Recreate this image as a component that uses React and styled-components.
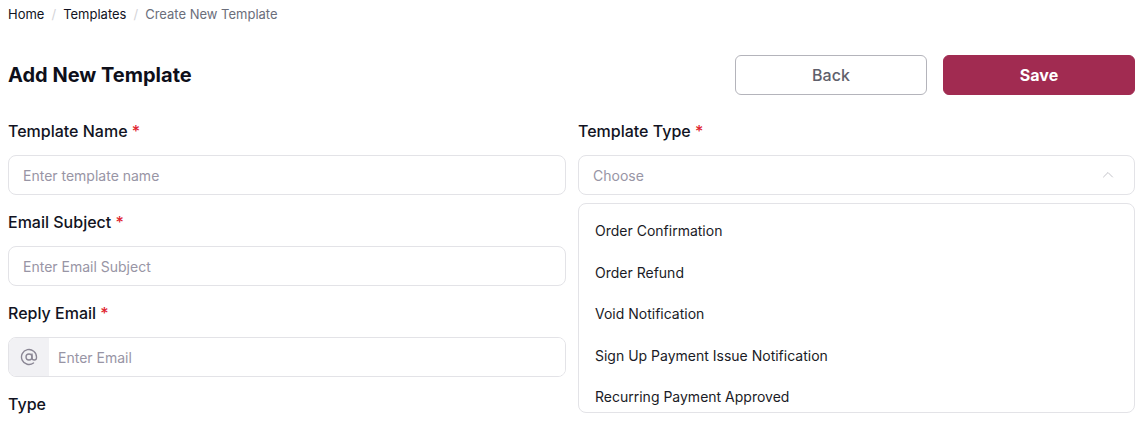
import React from 'react'
import styled, { createGlobalStyle } from 'styled-components'

const GlobalStyle = createGlobalStyle`
  html, body {
    margin: 0;
    padding: 0;
    background: #ffffff;
    font-family: Inter, "Noto Sans", sans-serif;
    color: #111322;
  }
  * { box-sizing: border-box; }
`

const options = [
  'Order Confirmation',
  'Order Refund',
  'Void Notification',
  'Sign Up Payment Issue Notification',
  'Recurring Payment Approved',
]

const App = () => {
  return (
    <Page>
      <GlobalStyle />
      <Breadcrumb>
        <Crumb>Home</Crumb>
        <Sep>/</Sep>
        <Crumb>Templates</Crumb>
        <Sep>/</Sep>
        <Crumb current>Create New Template</Crumb>
      </Breadcrumb>

      <TopBar>
        <Title>Add New Template</Title>
        <Actions>
          <Button>Back</Button>
          <Button primary>Save</Button>
        </Actions>
      </TopBar>

      <Grid>
        <Column>
          <Field>
            <Label>Template Name <Req>*</Req></Label>
            <Input placeholder="Enter template name" />
          </Field>
          <Field>
            <Label>Email Subject <Req>*</Req></Label>
            <Input placeholder="Enter Email Subject" />
          </Field>
          <Field>
            <Label>Reply Email <Req>*</Req></Label>
            <Group>
              <Addon>
                <svg width="18" height="18" viewBox="0 0 24 24" fill="none" stroke="#8a8694" strokeWidth="1.8" strokeLinecap="round" strokeLinejoin="round">
                  <circle cx="12" cy="12" r="4" />
                  <path d="M16 8v5a3 3 0 0 0 6 0v-1a10 10 0 1 0-4 8" />
                </svg>
              </Addon>
              <GroupInput placeholder="Enter Email" />
            </Group>
          </Field>
          <Field>
            <Label>Type</Label>
          </Field>
        </Column>

        <Column>
          <Field>
            <Label>Template Type <Req>*</Req></Label>
            <Select>
              <span>Choose</span>
              <svg width="12" height="12" viewBox="0 0 12 12" fill="none" stroke="#c4c4ca" strokeWidth="1" strokeLinecap="round">
                <path d="M1.5 8L6 3.5L10.5 8" />
              </svg>
            </Select>
            <Menu>
              {options.map((o) => (
                <Option key={o}>{o}</Option>
              ))}
            </Menu>
          </Field>
        </Column>
      </Grid>
    </Page>
  )
}

export default App

const Page = styled.div`
  padding: 6px 9px 0 8px;
  height: 423px;
  overflow: hidden;
`
const Breadcrumb = styled.nav`
  display: flex;
  align-items: center;
  font-size: 13px;
  line-height: 16px;
`
const Crumb = styled.span`
  color: ${(p) => (p.current ? '#6b6e7b' : '#111322')};
`
const Sep = styled.span`
  color: #d4d4d8;
  margin: 0 7px;
`
const TopBar = styled.div`
  display: flex;
  justify-content: space-between;
  align-items: center;
  margin-top: 33px;
`
const Title = styled.h1`
  margin: 0;
  font-size: 20px;
  font-weight: 700;
  color: #0e0f1a;
`
const Actions = styled.div`
  display: flex;
  gap: 16px;
`
const Button = styled.button`
  width: 192px;
  height: 40px;
  border-radius: 6px;
  font-family: inherit;
  font-size: 16px;
  font-weight: ${(p) => (p.primary ? 700 : 500)};
  border: 1px solid ${(p) => (p.primary ? '#a12b51' : '#b4b4bb')};
  background: ${(p) => (p.primary ? '#a12b51' : '#ffffff')};
  color: ${(p) => (p.primary ? '#ffffff' : '#5f606b')};
`
const Grid = styled.div`
  display: grid;
  grid-template-columns: 558px 557px;
  column-gap: 12px;
  margin-top: 24px;
`
const Column = styled.div`
  display: flex;
  flex-direction: column;
  gap: 15px;
`
const Field = styled.div`
  display: flex;
  flex-direction: column;
`
const Label = styled.label`
  font-size: 16px;
  font-weight: 500;
  line-height: 24px;
  color: #111322;
  margin-bottom: 12px;
`
const Req = styled.span`
  color: #e0242f;
`
const Input = styled.input`
  height: 40px;
  border: 1px solid #e3e3e7;
  border-radius: 8px;
  padding: 0 14px;
  font-family: inherit;
  font-size: 14px;
  outline: none;
  &::placeholder {
    color: #9895a5;
  }
`
const Group = styled.div`
  display: flex;
  height: 40px;
  border: 1px solid #e3e3e7;
  border-radius: 8px;
  overflow: hidden;
`
const Addon = styled.div`
  width: 40px;
  display: flex;
  align-items: center;
  justify-content: center;
  background: #f1f1f4;
`
const GroupInput = styled.input`
  flex: 1;
  border: none;
  padding: 0 9px;
  font-family: inherit;
  font-size: 14px;
  outline: none;
  &::placeholder {
    color: #9895a5;
  }
`
const Select = styled.div`
  height: 40px;
  border: 1px solid #e3e3e7;
  border-radius: 8px;
  padding: 0 20px 0 14px;
  display: flex;
  align-items: center;
  justify-content: space-between;
  font-size: 14px;
  color: #9895a5;
`
const Menu = styled.ul`
  list-style: none;
  margin: 8px 0 0;
  padding: 6px 0 0;
  border: 1px solid #e3e3e7;
  border-radius: 8px;
  height: 210px;
  overflow: hidden;
`
const Option = styled.li`
  padding: 0 16px;
  height: 41.5px;
  display: flex;
  align-items: center;
  font-size: 14px;
  color: #1a1b26;
`
